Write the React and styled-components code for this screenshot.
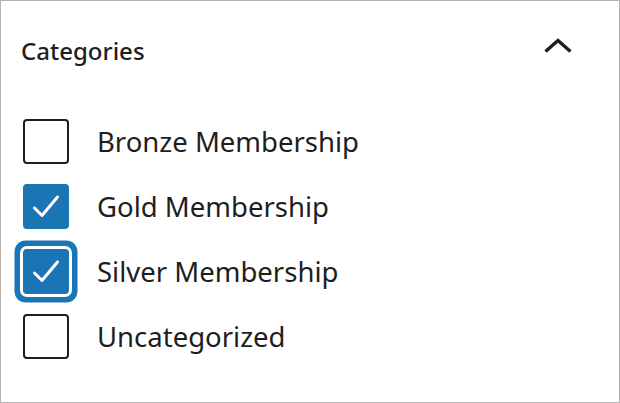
import React, { useState } from "react";
import styled, { createGlobalStyle } from "styled-components";

const GlobalStyle = createGlobalStyle`
  html, body {
    margin: 0;
    padding: 0;
    background: #ffffff;
  }
  body {
    font-family: "Noto Sans", "Open Sans", sans-serif;
    color: #1e1e1e;
  }
`;

const categories = [
  { id: "bronze", label: "Bronze Membership", checked: false },
  { id: "gold", label: "Gold Membership", checked: true },
  { id: "silver", label: "Silver Membership", checked: true, focused: true },
  { id: "uncat", label: "Uncategorized", checked: false },
];

// white tick drawn inside the 42x41 inner area of the box
function Check() {
  return (
    <svg width="42" height="41" viewBox="0 0 42 41" fill="none">
      <path
        d="M9.5 22 L17 29.5 L32.5 11"
        stroke="#ffffff"
        strokeWidth="3"
        strokeLinecap="round"
        strokeLinejoin="round"
      />
    </svg>
  );
}

function App() {
  const [items, setItems] = useState(categories);
  const [open, setOpen] = useState(true);

  const toggle = (id) =>
    setItems((list) =>
      list.map((it) => (it.id === id ? { ...it, checked: !it.checked } : it))
    );

  return (
    <Panel>
      <GlobalStyle />
      <Header onClick={() => setOpen(!open)}>
        <Title>Categories</Title>
        <Chevron width="30" height="16" viewBox="0 0 30 16">
          <path d="M2.5 13.5 L15 2.5 L27.5 13.5" fill="none" stroke="#1e1e1e" strokeWidth="3.4" />
        </Chevron>
      </Header>
      {open && (
        <List>
          {items.map((it) => (
            <Row key={it.id} onClick={() => toggle(it.id)}>
              <Box $checked={it.checked} $focused={it.focused}>
                {it.checked && <Check />}
              </Box>
              <Label>{it.label}</Label>
            </Row>
          ))}
        </List>
      )}
    </Panel>
  );
}

const Panel = styled.div`
  box-sizing: border-box;
  width: 620px;
  height: 403px;
  border: 1px solid #b3b3b3;
  background: #fff;
`;

const Header = styled.div`
  display: flex;
  align-items: center;
  justify-content: space-between;
  padding: 28px 46px 0 20px;
  height: 42px;
  cursor: pointer;
`;

const Title = styled.h2`
  margin: 0;
  font-size: 24px;
  font-weight: 500;
  color: #1e1e1e;
`;

const Chevron = styled.svg`
  display: block;
  margin-top: -8px;
`;

const List = styled.div`
  display: flex;
  flex-direction: column;
  gap: 20px;
  padding: 48px 0 0 22px;
`;

const Row = styled.label`
  display: flex;
  align-items: center;
  gap: 28px;
  cursor: pointer;
`;

const Box = styled.span`
  box-sizing: border-box;
  flex: none;
  display: flex;
  align-items: center;
  justify-content: center;
  width: 46px;
  height: 45px;
  border-radius: 4px;
  border: 2px solid ${(p) => (p.$checked ? "#1b75b5" : "#1e1e1e")};
  background: ${(p) => (p.$checked ? "#1b75b5" : "#fff")};
  box-shadow: ${(p) =>
    p.$focused ? "0 0 0 3px #ffffff, 0 0 0 8.5px #1b75b5" : "none"};
`;

const Label = styled.span`
  font-size: 27.5px;
  color: #1e1e1e;
  line-height: 1;
`;

export default App;
